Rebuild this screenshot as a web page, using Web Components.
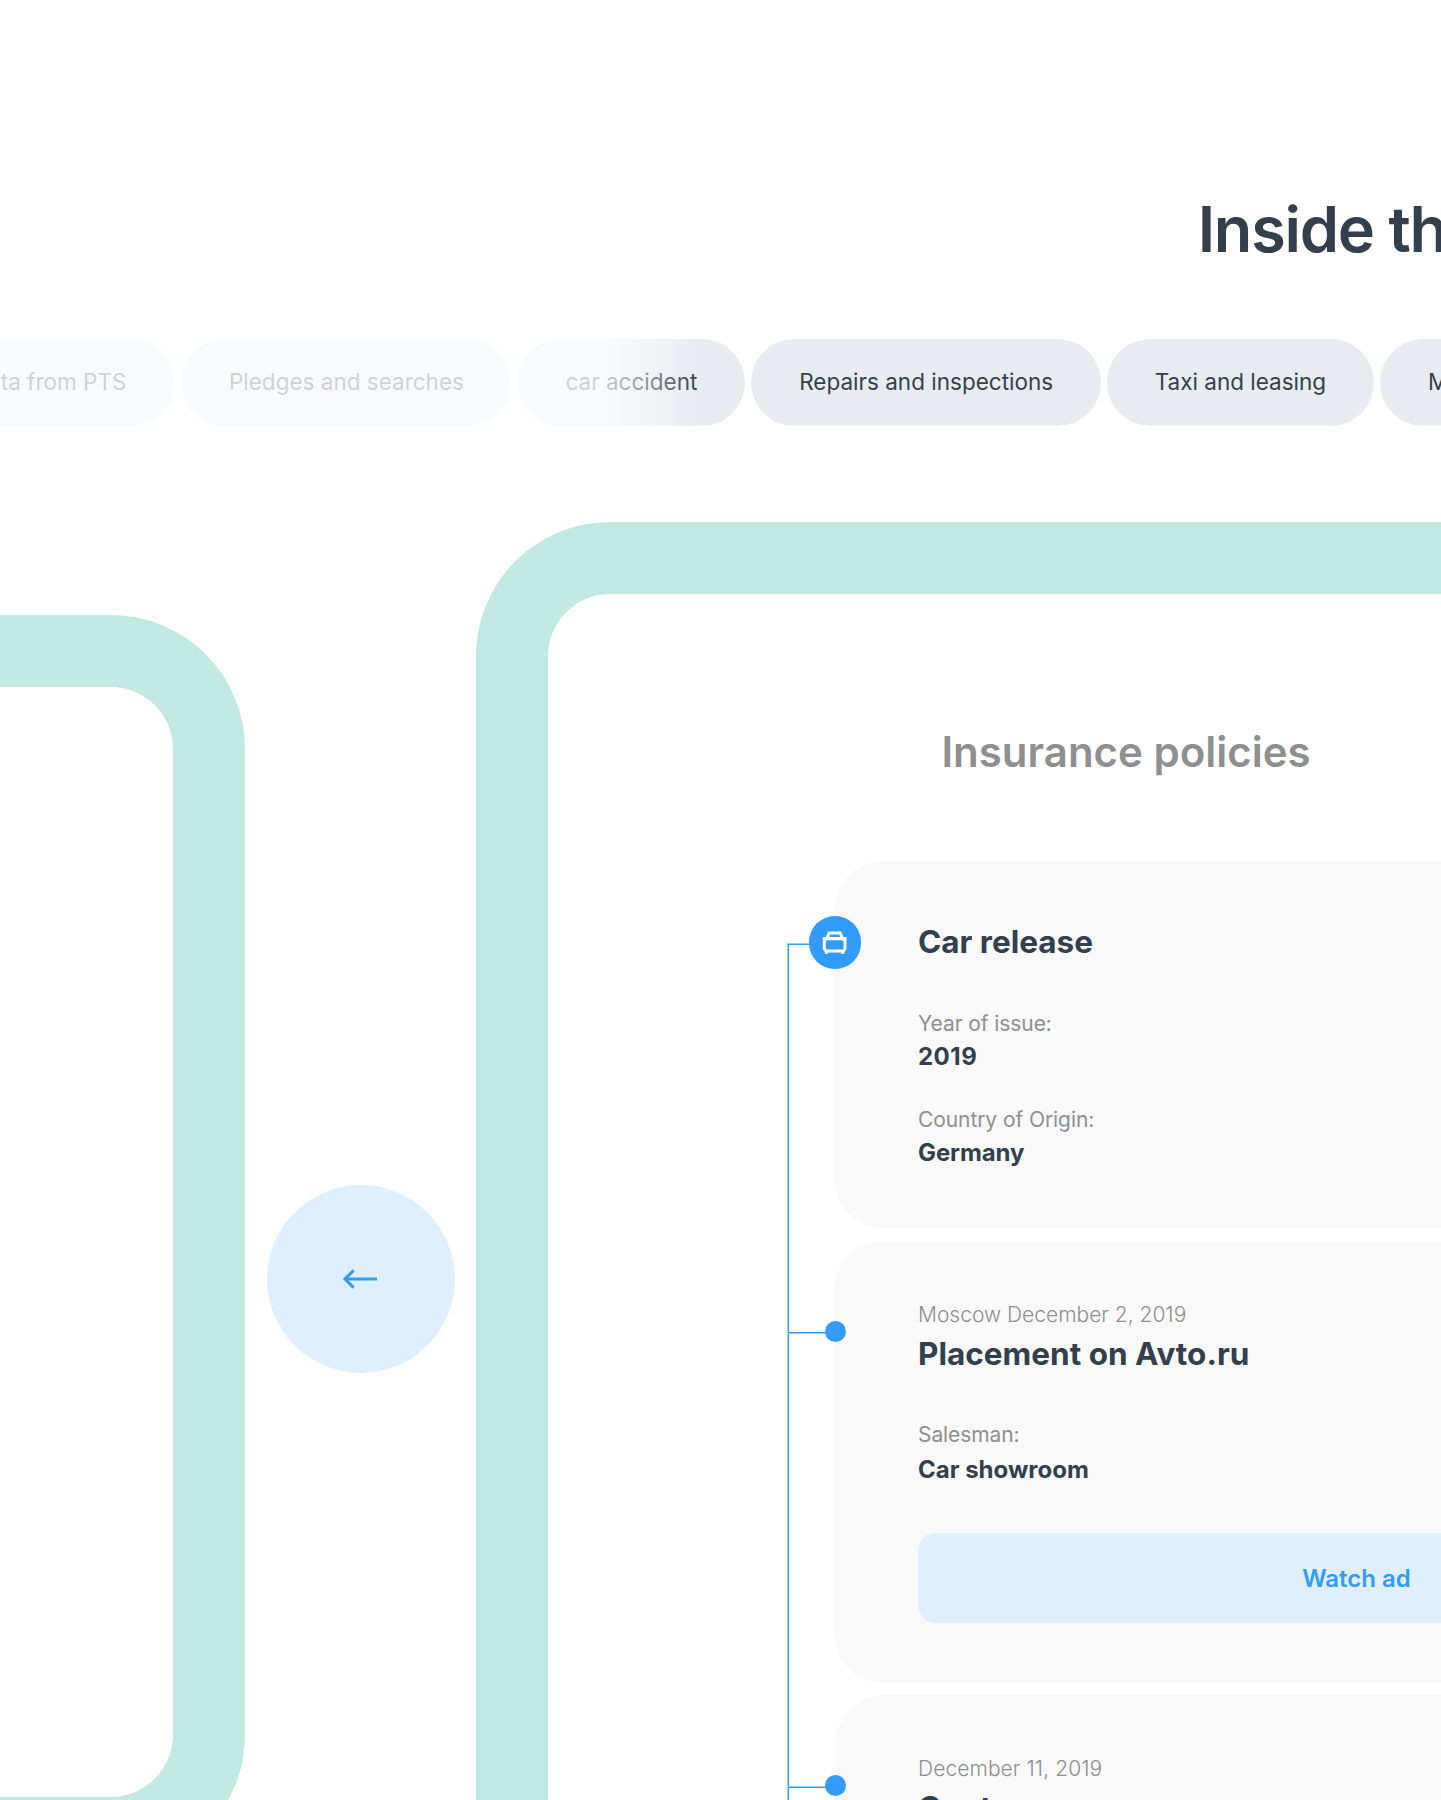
<!DOCTYPE html>
<html lang="en">
<head>
<meta charset="utf-8">
<title>Vehicle report</title>
<style>
  html, body { margin: 0; }
  body {
    width: 1441px; height: 1800px; overflow: hidden; background: #fff;
    font-family: Inter, "Liberation Sans", sans-serif; color: #343f4e;
  }
</style>
</head>
<body>
<report-page>
  <page-title slot="title">Inside th</page-title>
  <tab-strip slot="tabs">
    <tab-pill style="--w:300px" align="end">ta from PTS</tab-pill>
    <tab-pill style="--w:330px">Pledges and searches</tab-pill>
    <tab-pill style="--w:228px">car accident</tab-pill>
    <tab-pill style="--w:349.5px">Repairs and inspections</tab-pill>
    <tab-pill style="--w:267px">Taxi and leasing</tab-pill>
    <tab-pill style="--w:200px" align="start">M</tab-pill>
  </tab-strip>
  <side-frame slot="previous"></side-frame>
  <nav-arrow slot="nav"></nav-arrow>
  <report-frame slot="current">
    <span slot="heading">Insurance policies</span>
    <time-line>
      <event-card style="--h:367.5px; --pt:62.5px">
        <event-marker slot="marker" kind="car" style="--line:82px"></event-marker>
        <card-title>Car release</card-title>
        <data-field style="--mt:49.3px; --gap:5.4px; --ls:.5px" label="Year of issue:">2019</data-field>
        <data-field style="--mt:34.4px; --gap:5.4px; --ls:-.1px" label="Country of Origin:">Germany</data-field>
      </event-card>
      <event-card style="--h:442px; --pt:61.3px">
        <event-marker slot="marker" style="--line:91.5px; --a:#319bff; --b:#98cdff"></event-marker>
        <card-date>Moscow December 2, 2019</card-date>
        <card-title style="margin-top:7px">Placement on Avto.ru</card-title>
        <data-field style="--mt:48.6px; --gap:7.3px" label="Salesman:">Car showroom</data-field>
        <action-button>Watch ad</action-button>
      </event-card>
      <event-card style="--h:442px; --pt:61.3px; --inset:1px">
        <event-marker slot="marker" style="--line:91.5px"></event-marker>
        <card-date style="letter-spacing:.08px">December 11, 2019</card-date>
        <card-title style="margin-top:7px">Cont</card-title>
      </event-card>
    </time-line>
  </report-frame>
</report-page>

<script>
const define = (name, html, setup) => {
  const template = document.createElement('template');
  template.innerHTML = html;
  customElements.define(name, class extends HTMLElement {
    constructor() {
      super();
      this.attachShadow({ mode: 'open' }).append(template.content.cloneNode(true));
    }
    connectedCallback() { if (setup) setup(this, this.shadowRoot); }
  });
};

define('report-page', `
  <style>
    :host { display: flex; flex-direction: column; width: 1441px; height: 1800px; overflow: hidden; }
    .tabs { flex: none; margin-top: 72px; }
    .stage { display: flex; flex: none; align-items: flex-start; margin-top: 96px; }
  </style>
  <slot name="title"></slot>
  <div class="tabs"><slot name="tabs"></slot></div>
  <div class="stage">
    <slot name="previous"></slot>
    <slot name="nav"></slot>
    <slot name="current"></slot>
  </div>`);

define('page-title', `
  <style>
    :host { display: block; flex: none; padding: 191px 0 0 1197.7px; width: 243px; }
    h1 { margin: 0; font-size: 63px; line-height: 76px; font-weight: 600; letter-spacing: -0.02em; white-space: nowrap; }
  </style>
  <h1><slot></slot></h1>`);

/* Row of tabs; a translucent veil fades the ones scrolled to the left */
define('tab-strip', `
  <style>
    :host { display: block; position: relative; height: 87px; }
    .row { display: flex; gap: 6px; margin-left: -124.6px; width: max-content; }
    .veil {
      position: absolute; inset: 0 auto 0 0; width: 700px;
      background: linear-gradient(90deg, rgba(255,255,255,.76) 600px, rgba(255,255,255,.42) 650px, rgba(255,255,255,.1) 685px, rgba(255,255,255,0) 700px);
    }
  </style>
  <div class="row"><slot></slot></div>
  <div class="veil"></div>`);

define('tab-pill', `
  <style>
    :host {
      display: flex; align-items: center; justify-content: center; flex: none; box-sizing: border-box;
      width: var(--w); height: 87px; padding-bottom: 2px; border-radius: 43.5px;
      background: #e8ecf1; font-size: 22.5px; line-height: 28px; white-space: nowrap;
    }
    :host([align="end"]) { justify-content: flex-end; padding-right: 49px; }
    :host([align="start"]) { justify-content: flex-start; padding-left: 48px; }
  </style>
  <slot></slot>`);

define('side-frame', `
  <style>
    :host {
      display: block; flex: none; box-sizing: border-box; width: 244.7px; height: 1254px; margin-top: 93px;
      border: 72px solid #c2e9e1; border-left: 0; border-radius: 0 134px 134px 0;
    }
  </style>`);

define('nav-arrow', `
  <style>
    :host { display: block; flex: none; margin: 662.6px 21px 0 22.3px; }
    button { display: block; width: 188px; height: 188px; padding: 0; border: 0; border-radius: 50%; background: #e0efff; }
    svg { display: block; }
  </style>
  <button aria-label="Previous">
    <svg width="188" height="188" fill="none" stroke="#319bff" stroke-width="3">
      <path d="M110 94H78.5M86.6 85.4L78 94L86.6 102.6"/>
    </svg>
  </button>`);

define('report-frame', `
  <style>
    :host {
      display: block; flex: none; box-sizing: border-box; width: 965px; height: 1400px; overflow: hidden;
      border: 72px solid #c2e9e1; border-width: 72px 0 0 72px; border-radius: 134px 0 0 0;
    }
    h2 { margin: 0; padding: 132.6px 0 84.4px 393.4px; font-size: 42px; line-height: 50px; font-weight: 600; color: #8f8f8f; white-space: nowrap; }
  </style>
  <h2><slot name="heading"></slot></h2>
  <slot></slot>`);

/* Column of cards with a vertical rail that starts at the first marker */
define('time-line', `
  <style>
    :host { display: flex; align-items: flex-start; margin-left: 239px; }
    .rail { flex: none; width: 2px; height: 1400px; margin-top: 82px; background: linear-gradient(90deg, #98cdff 1px, #319bff 1px); }
    .cards { display: flex; flex-direction: column; gap: 12.2px; margin-left: 45px; }
  </style>
  <div class="rail"></div>
  <div class="cards"><slot></slot></div>`);

define('event-card', `
  <style>
    :host {
      display: block; position: relative; box-sizing: border-box; width: calc(1046px - var(--inset, 0px)); height: var(--h);
      margin-left: var(--inset, 0px);
      padding: var(--pt) 84px 0 calc(84px - var(--inset, 0px)); border-radius: 50px; background: #f9f9f9;
    }
    ::slotted(event-marker) { position: absolute; top: var(--line); left: calc(-46px - var(--inset, 0px)); }
  </style>
  <slot name="marker"></slot>
  <slot></slot>`);

define('event-marker', `
  <style>
    :host { display: block; width: 46px; height: 2px; background: linear-gradient(var(--a, #98cdff) 1px, var(--b, #319bff) 1px); }
    .dot { position: absolute; left: 37.3px; top: -10.9px; width: 21px; height: 21px; border-radius: 50%; background: #319bff; }
    .car { display: none; position: absolute; left: 20.6px; top: -26.8px; width: 52.5px; height: 52.5px; border-radius: 50%; background: #319bff; }
    :host([kind="car"]) .dot { display: none; }
    :host([kind="car"]) .car { display: block; }
    svg { display: block; }
  </style>
  <div class="dot"></div>
  <div class="car">
    <svg width="52.5" height="52.5" viewBox="0 0 52.5 52.5" fill="none" stroke="#fff" stroke-width="3">
      <rect x="15.3" y="22.8" width="20.7" height="12.3" rx="3"/>
      <path d="M17.9 22.6L20.1 16.9H31.2L33.4 22.6"/>
      <path d="M13.7 22.5H37.6M17.4 35V38M33.8 35V38"/>
    </svg>
  </div>`);

define('card-date', `
  <style>:host { display: block; font-size: 21px; line-height: 26px; font-weight: 300; color: #8f8f8f; white-space: nowrap; }</style>
  <slot></slot>`);

define('card-title', `
  <style>
    :host { display: block; }
    h3 { margin: 0; font-size: 31.5px; line-height: 38px; font-weight: 700; white-space: nowrap; }
  </style>
  <h3><slot></slot></h3>`);

define('data-field', `
  <style>
    :host { display: flex; flex-direction: column; gap: var(--gap); margin-top: var(--mt); }
    .label { font-size: 21px; line-height: 26px; color: #8f8f8f; letter-spacing: -.08px; }
    .value { font-size: 24px; line-height: 30px; font-weight: 700; letter-spacing: var(--ls, normal); }
  </style>
  <div class="label"></div>
  <div class="value"><slot></slot></div>`,
  (el, root) => { root.querySelector('.label').textContent = el.getAttribute('label'); });

define('action-button', `
  <style>
    :host {
      display: flex; align-items: center; justify-content: center; box-sizing: border-box; height: 90px; margin-top: 48.3px;
      padding: 1.4px 1px 0 0;
      border-radius: 18px; background: #e0efff; color: #319bff; font-size: 24px; line-height: 30px; font-weight: 600;
    }
  </style>
  <slot></slot>`);
</script>
</body>
</html>
